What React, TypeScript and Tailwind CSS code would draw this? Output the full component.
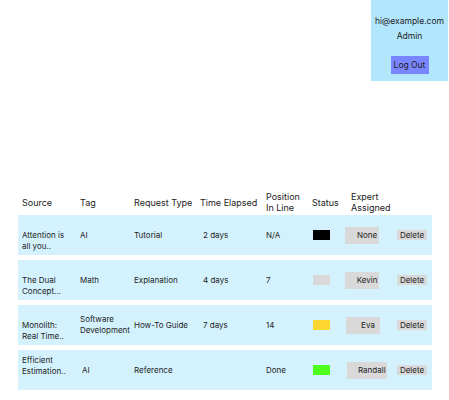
type Row = {
  source: [string, string];
  sourceAlign: "top" | "bottom";
  tag: string[];
  tagPad?: string;
  type: string;
  time: string;
  position: string;
  status: string;
  expert: string;
  expertPad?: string;
};

const rows: Row[] = [
  {
    source: ["Attention is", "all you.."],
    sourceAlign: "top",
    tag: ["AI"],
    type: "Tutorial",
    time: "2 days",
    position: "N/A",
    status: "bg-black",
    expert: "None",
  },
  {
    source: ["The Dual", "Concept..."],
    sourceAlign: "top",
    tag: ["Math"],
    type: "Explanation",
    time: "4 days",
    position: "7",
    status: "bg-[#d9d9d9]",
    expert: "Kevin",
  },
  {
    source: ["Monolith:", "Real Time.."],
    sourceAlign: "top",
    tag: ["Software", "Development"],
    type: "How-To Guide",
    time: "7 days",
    position: "14",
    status: "bg-[#fdd630]",
    expert: "Eva",
    expertPad: "pl-[1px]",
  },
  {
    source: ["Efficient", "Estimation.."],
    sourceAlign: "bottom",
    tag: ["AI"],
    tagPad: "pl-[2px]",
    type: "Reference",
    time: "",
    position: "Done",
    status: "bg-[#4cff1c]",
    expert: "Randall",
    expertPad: "pl-[2px]",
  },
];

const cols = "grid grid-cols-[62px_54px_66px_66px_46px_33px_51px_36px]";

export default function App() {
  return (
    <div className="w-[449px] h-[400px] bg-white text-[#222] font-['Inter',sans-serif]">
      <div className="flex justify-end pr-[1px]">
        <div className="w-[77px] h-[81px] bg-[#b2e6fd] flex flex-col items-center pt-[15px] text-[8.5px] leading-[12px]">
          <div>hi@example.com</div>
          <div className="mt-[3px]">Admin</div>
          <button
            type="button"
            className="mt-[14px] w-[38px] h-[18px] bg-[#7a86ff] text-[8.5px] leading-[18px]"
          >
            Log Out
          </button>
        </div>
      </div>

      <div className="mt-[109px] ml-[18px] w-[414px]">
        <div className={`${cols} items-center h-[24px] text-[9px] leading-[11px]`}>
          <div className="pl-[4px]">Source</div>
          <div>Tag</div>
          <div>Request Type</div>
          <div>Time Elapsed</div>
          <div>
            Position
            <br />
            In Line
          </div>
          <div>Status</div>
          <div className="pl-[6px]">
            Expert
            <br />
            Assigned
          </div>
          <div />
        </div>

        <div className="mt-[1px] flex flex-col gap-[5px]">
          {rows.map((r) => (
            <div
              key={r.source[0]}
              className={`${cols} items-center h-[40px] bg-[#d4f2fe] text-[8px] leading-[11px]`}
            >
              <div
                className={`pl-[4px] ${
                  r.sourceAlign === "top" ? "pt-[11px]" : "pb-[9px]"
                }`}
              >
                {r.source[0]}
                <br />
                {r.source[1]}
              </div>
              <div className={r.tagPad}>
                {r.tag.map((t) => (
                  <div key={t}>{t}</div>
                ))}
              </div>
              <div>{r.type}</div>
              <div className="pl-[3px]">{r.time}</div>
              <div>{r.position}</div>
              <div className="pl-[1px]">
                <div className={`w-[17px] h-[10px] ${r.status}`} />
              </div>
              <div className={r.expertPad}>
                <button
                  type="button"
                  className="min-w-[34px] h-[17px] pl-[11px] pr-[1px] bg-[#d9d9d9] text-[8px] text-center"
                >
                  {r.expert}
                </button>
              </div>
              <div className="pl-[1px]">
                <button
                  type="button"
                  className="w-[30px] h-[10px] bg-[#d9d9d9] text-[8px] leading-[10px]"
                >
                  Delete
                </button>
              </div>
            </div>
          ))}
        </div>
      </div>
    </div>
  );
}
